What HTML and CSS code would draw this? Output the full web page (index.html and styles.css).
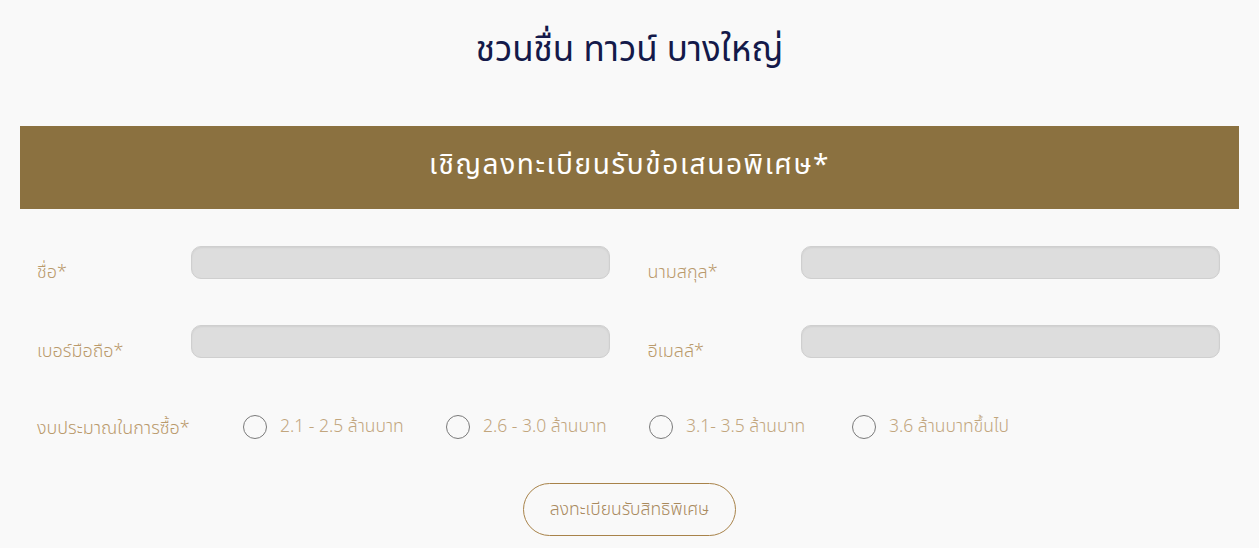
FILE: index.html
```html
<!DOCTYPE html>
<html lang="th">
<head>
<meta charset="utf-8">
<title>ชวนชื่น ทาวน์ บางใหญ่</title>
<link rel="stylesheet" href="styles.css">
</head>
<body>
<div class="page">
  <h1 class="title">ชวนชื่น ทาวน์ บางใหญ่</h1>
  <div class="banner">เชิญลงทะเบียนรับข้อเสนอพิเศษ*</div>
  <form class="form">
    <div class="grid">
      <div class="field">
        <label class="label">ชื่อ*</label>
        <input class="input" type="text">
      </div>
      <div class="field">
        <label class="label">นามสกุล*</label>
        <input class="input" type="text">
      </div>
      <div class="field">
        <label class="label">เบอร์มือถือ*</label>
        <input class="input" type="text">
      </div>
      <div class="field">
        <label class="label">อีเมลล์*</label>
        <input class="input" type="text">
      </div>
    </div>
    <div class="budget">
      <span class="label budget-label">งบประมาณในการซื้อ*</span>
      <div class="options">
        <label class="option"><span class="radio"></span><span class="opt-text">2.1 - 2.5 ล้านบาท</span></label>
        <label class="option"><span class="radio"></span><span class="opt-text">2.6 - 3.0 ล้านบาท</span></label>
        <label class="option"><span class="radio"></span><span class="opt-text">3.1- 3.5 ล้านบาท</span></label>
        <label class="option"><span class="radio"></span><span class="opt-text">3.6 ล้านบาทขึ้นไป</span></label>
      </div>
    </div>
    <div class="actions">
      <button type="button" class="submit">ลงทะเบียนรับสิทธิพิเศษ</button>
    </div>
  </form>
</div>
</body>
</html>
```
FILE: styles.css
```css
* { box-sizing: border-box; }
html, body {
  margin: 0;
  padding: 0;
  background: #f9f9f9;
  font-family: "Noto Sans", "Noto Sans Thai", sans-serif;
}
.page {
  padding: 0 20px;
  height: 548px;
  overflow: hidden;
}
.title {
  margin: 0;
  height: 126px;
  padding-top: 25px;
  text-align: center;
  font-size: 35px;
  font-weight: 400;
  color: #14194a;
  line-height: 46px;
}
.banner {
  height: 83px;
  background: #8b7140;
  color: #ffffff;
  font-size: 28px;
  letter-spacing: 1.6px;
  text-align: center;
  line-height: 74px;
}
.form {
  padding: 37px 19px 0 17px;
}
.grid {
  display: grid;
  grid-template-columns: 1fr 1fr;
  column-gap: 38px;
  row-gap: 46px;
}
.field {
  display: flex;
  align-items: flex-end;
}
.label {
  width: 154px;
  flex: none;
  color: #b99a6c;
  font-size: 18px;
  font-weight: 300;
  line-height: 22px;
  margin-bottom: -3px;
}
.input {
  flex: 1;
  height: 33px;
  border: 1px solid #cfcfcf;
  border-radius: 10px;
  background: #dddddd;
  box-shadow: inset 0 1px 2px rgba(0,0,0,0.06);
  outline: none;
}
.grid .field:nth-child(even) .input {
  margin-left: -1px;
}
.budget {
  display: flex;
  align-items: center;
  margin-top: 55px;
}
.budget-label {
  width: 206px;
  margin-bottom: 0;
}
.options {
  display: flex;
}
.option {
  display: flex;
  align-items: center;
  width: 203px;
}
.radio {
  width: 24px;
  height: 24px;
  border: 1.5px solid #7a7a7a;
  border-radius: 50%;
  flex: none;
  margin-right: 13px;
}
.opt-text {
  color: #c2a67e;
  font-size: 17.5px;
  font-weight: 300;
}
.actions {
  display: flex;
  justify-content: center;
  margin-top: 43px;
  padding-left: 2px;
}
.submit {
  width: 213px;
  height: 53px;
  border: 1px solid #a8834a;
  border-radius: 27px;
  background: transparent;
  color: #a98a5e;
  font-family: inherit;
  font-size: 17.5px;
  font-weight: 300;
}
```
